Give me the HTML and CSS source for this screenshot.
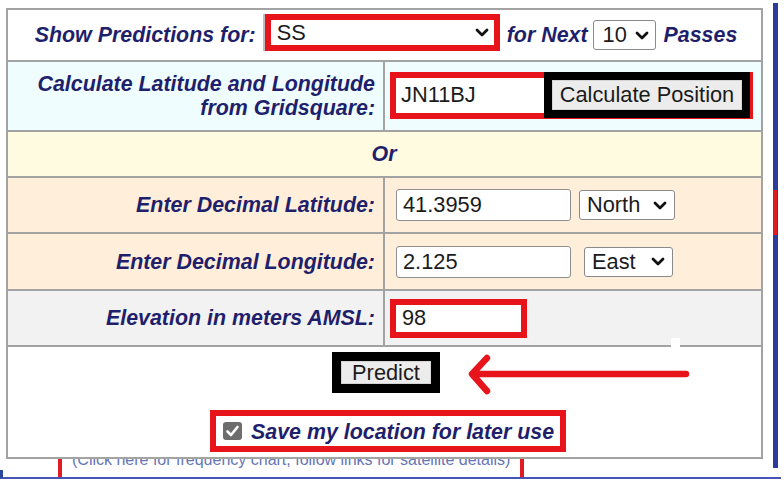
FILE: index.html
```html
<!DOCTYPE html>
<html lang="en">
<head>
<meta charset="utf-8">
<title>Satellite Pass Predictions</title>
<link rel="stylesheet" href="styles.css">
</head>
<body>
<div class="page">
  <div class="backdrop">
    <div class="under-link"><span class="under-text">(Click here for frequency chart, follow links for satellite details)</span></div>
    <div class="side-bar"><span class="side-mark"></span></div>
    <div class="base-line"></div>
    <div class="corner-bit"></div>
  </div>

  <form class="panel">
    <div class="cell full first row-sat">
      <span class="lbl">Show Predictions for:</span>
      <span class="hl-red sat-box">
        <span class="fake-select sat-select"><span class="sel-text">SS</span><svg class="chev" viewBox="0 0 14 9" width="14" height="9"><path d="M2 2 L7 7 L12 2"/></svg></span>
      </span>
      <span class="lbl next-lbl">for Next</span>
      <span class="fake-select passes-select"><span class="sel-text">10</span><svg class="chev" viewBox="0 0 14 9" width="14" height="9"><path d="M2 2 L7 7 L12 2"/></svg></span>
      <span class="lbl passes-lbl">Passes</span>
    </div>

    <div class="cell label row-grid">Calculate Latitude and Longitude<br>from Gridsquare:</div>
    <div class="cell value row-grid">
      <span class="grid-box">
        <input class="txt grid-input" type="text" value="JN11BJ">
        <span class="hl-black calc-box"><button type="button" class="btn calc-btn">Calculate Position</button></span>
      </span>
    </div>

    <div class="cell full or-row">Or</div>

    <div class="cell label row-coord">Enter Decimal Latitude:</div>
    <div class="cell value row-coord">
      <input class="txt coord-input" type="text" value="41.3959">
      <span class="fake-select ns-select"><span class="sel-text">North</span><svg class="chev" viewBox="0 0 14 9" width="14" height="9"><path d="M2 2 L7 7 L12 2"/></svg></span>
    </div>

    <div class="cell label row-coord">Enter Decimal Longitude:</div>
    <div class="cell value row-coord">
      <input class="txt coord-input" type="text" value="2.125">
      <span class="fake-select ew-select"><span class="sel-text">East</span><svg class="chev" viewBox="0 0 14 9" width="14" height="9"><path d="M2 2 L7 7 L12 2"/></svg></span>
    </div>

    <div class="cell label row-elev">Elevation in meters AMSL:</div>
    <div class="cell value row-elev">
      <span class="hl-red elev-box"><input class="txt elev-input" type="text" value="98"></span>
    </div>

    <div class="cell full row-submit">
      <span class="hl-black predict-box"><button type="button" class="btn predict-btn">Predict</button></span>
      <span class="hl-red save-box">
        <span class="checkbox"><svg viewBox="0 0 19 18" width="19" height="18"><path d="M4.5 9.5 L8 13 L14.5 5"/></svg></span>
        <span class="save-lbl">Save my location for later use</span>
      </span>
    </div>
  </form>

  <svg class="arrow" viewBox="0 0 784 482" width="784" height="482">
    <path d="M686 374 L473 374 M487 358 L472 374 L487 391"/>
  </svg>
  <span class="white-tick"></span>
</div>
</body>
</html>
```

FILE: styles.css
```css
* { box-sizing: border-box; }

html, body {
  margin: 0;
  padding: 0;
  background: #ffffff;
}

body {
  font-family: "Liberation Sans", Arial, sans-serif;
}

.page {
  position: relative;
  width: 784px;
  height: 482px;
  overflow: hidden;
  background: #ffffff;
}

/* ---------- page behind the popup ---------- */
.backdrop {
  position: absolute;
  inset: 0;
  z-index: 0;
}

.under-link {
  position: absolute;
  left: 58px;
  top: 450px;
  width: 466px;
  height: 28px;
  border-left: 4px solid #e21b22;
  border-right: 4px solid #e21b22;
  padding-left: 10px;
  font-size: 16px;
  line-height: 18px;
  padding-top: 1px;
  color: #6676b6;
  white-space: nowrap;
}

.side-bar {
  position: absolute;
  left: 773px;
  top: 3px;
  width: 5px;
  height: 465px;
  background: #2c3b9c;
}

.side-mark {
  position: absolute;
  left: 0;
  top: 187px;
  width: 4px;
  height: 45px;
  background: #e21b22;
}

.base-line {
  position: absolute;
  left: 0;
  top: 477px;
  width: 781px;
  height: 2px;
  background: #4753b6;
}

.corner-bit {
  position: absolute;
  left: 0;
  top: 470px;
  width: 3px;
  height: 8px;
  background: #2c4a9c;
}

/* ---------- popup form ---------- */
.panel {
  position: relative;
  z-index: 2;
  margin: 8px 0 0 6px;
  width: 757px;
  height: 451px;
  border: 2px solid #a3a3a3;
  background: #ffffff;
  display: grid;
  grid-template-columns: 375px 1fr;
  grid-template-rows: 50px 70px 46px 56px 57px 56px 1fr;
  color: #1f1f6c;
}

.cell {
  border-top: 2px solid #a3a3a3;
}

.cell.first {
  border-top: 0;
}

.full {
  grid-column: 1 / -1;
}

.label {
  display: flex;
  align-items: center;
  justify-content: flex-end;
  text-align: right;
  padding-right: 8px;
  font-style: italic;
  font-weight: bold;
  font-size: 21.4px;
  line-height: 24px;
}

.value {
  border-left: 2px solid #a3a3a3;
  display: flex;
  align-items: center;
  padding-left: 5px;
}

.lbl {
  font-style: italic;
  font-weight: bold;
  font-size: 21.4px;
  line-height: 24px;
  white-space: nowrap;
}

/* row backgrounds */
.row-grid { background: #effdff; }
.or-row { background: #fffbe1; }
.row-coord { background: #ffefda; }
.row-elev { background: #f2f2f2; }

/* highlight annotations */
.hl-red {
  border: 6px solid #e8141c;
  display: inline-flex;
  align-items: center;
}

.hl-black {
  border: 8px solid #000000;
  display: inline-flex;
  align-items: center;
}

/* text inputs */
.txt {
  font-family: "Liberation Sans", Arial, sans-serif;
  font-size: 21.8px;
  color: #1b1b1b;
  background: #ffffff;
  margin: 0;
  outline: none;
}

/* fake selects */
.fake-select {
  display: inline-flex;
  align-items: center;
  justify-content: space-between;
  background: #ffffff;
  border: 1px solid #8a8a8a;
  border-radius: 3px;
  font-size: 21.8px;
  color: #1b1b1b;
  white-space: nowrap;
}

.chev {
  flex: none;
}

.chev path {
  fill: none;
  stroke: #111111;
  stroke-width: 2.8;
  stroke-linecap: round;
  stroke-linejoin: round;
}

/* row 1 */
.row-sat {
  display: flex;
  align-items: center;
  justify-content: center;
  padding-left: 3px;
}

.sat-box {
  margin-left: 9px;
  margin-top: -5px;
  height: 37px;
  width: 235px;
  box-shadow: -2px 0 0 #bdbdbd;
}

.sat-select {
  border: 0;
  border-radius: 0;
  width: 100%;
  height: 25px;
  padding: 0 5px 0 6px;
}

.next-lbl {
  margin-left: 7px;
}

.passes-select {
  margin-left: 5px;
  width: 63px;
  height: 30px;
  padding: 0 6px 0 9px;
}

.passes-lbl {
  margin-left: 8px;
}

/* row 2 */
.grid-box {
  display: flex;
  align-items: stretch;
  border: 6px solid #e8141c;
  border-right-width: 3px;
  height: 47px;
  margin-top: -2px;
}

.grid-input {
  width: 148px;
  height: 35px;
  border: 0;
  padding: 0 0 0 5px;
}

.calc-box {
  margin: -6px 0 -5px 0;
  width: 206px;
  height: 46px;
}

.btn {
  font-family: "Liberation Sans", Arial, sans-serif;
  font-size: 21.8px;
  color: #1b1b1b;
  background: #ececec;
  border: 1px solid #d4d4d4;
  margin: 0;
  padding: 0;
  cursor: pointer;
}

.calc-btn {
  width: 190px;
  height: 30px;
  line-height: 28px;
}

/* row 3 */
.or-row {
  display: flex;
  align-items: center;
  justify-content: center;
  font-style: italic;
  font-weight: bold;
  font-size: 21.4px;
  padding-right: 1px;
}

/* rows 4-5 */
.coord-input {
  margin-left: 6px;
  width: 175px;
  height: 32px;
  border: 1px solid #8f8f8f;
  border-radius: 3px;
  padding: 0 0 0 6px;
}

.ns-select {
  margin-left: 8px;
  width: 96px;
  height: 30px;
  padding: 0 7px 0 7px;
}

.ew-select {
  margin-left: 13px;
  width: 89px;
  height: 30px;
  padding: 0 7px 0 7px;
}

/* row 6 */
.elev-box {
  width: 137px;
  height: 39px;
}

.elev-input {
  width: 125px;
  height: 27px;
  border: 0;
  padding: 0 0 0 6px;
}

/* row 7 */
.row-submit {
  display: flex;
  flex-direction: column;
  align-items: center;
  padding-left: 3px;
}

.predict-box {
  margin-top: 5px;
  border-width: 9px;
  width: 108px;
  height: 41px;
}

.predict-btn {
  width: 90px;
  height: 23px;
  line-height: 21px;
}

.save-box {
  margin-top: 17px;
  width: 356px;
  height: 42px;
  padding-left: 7px;
  margin-left: 4px;
}

.checkbox {
  flex: none;
  width: 19px;
  height: 18px;
  border-radius: 3px;
  background: #6d6d6d;
  margin-right: 9px;
  display: inline-flex;
}

.checkbox path {
  fill: none;
  stroke: #ffffff;
  stroke-width: 2.6;
  stroke-linecap: round;
  stroke-linejoin: round;
}

.save-lbl {
  font-style: italic;
  font-weight: bold;
  font-size: 21.4px;
  line-height: 24px;
  white-space: nowrap;
  margin-top: 2px;
}

/* annotation arrow over the page */
.arrow {
  position: absolute;
  left: 0;
  top: 0;
  z-index: 3;
  pointer-events: none;
}

.arrow path {
  fill: none;
  stroke: #e8141c;
  stroke-width: 6.5;
  stroke-linecap: round;
  stroke-linejoin: round;
}

.white-tick {
  position: absolute;
  left: 671px;
  top: 338px;
  width: 9px;
  height: 10px;
  background: #ffffff;
  z-index: 3;
}
```
